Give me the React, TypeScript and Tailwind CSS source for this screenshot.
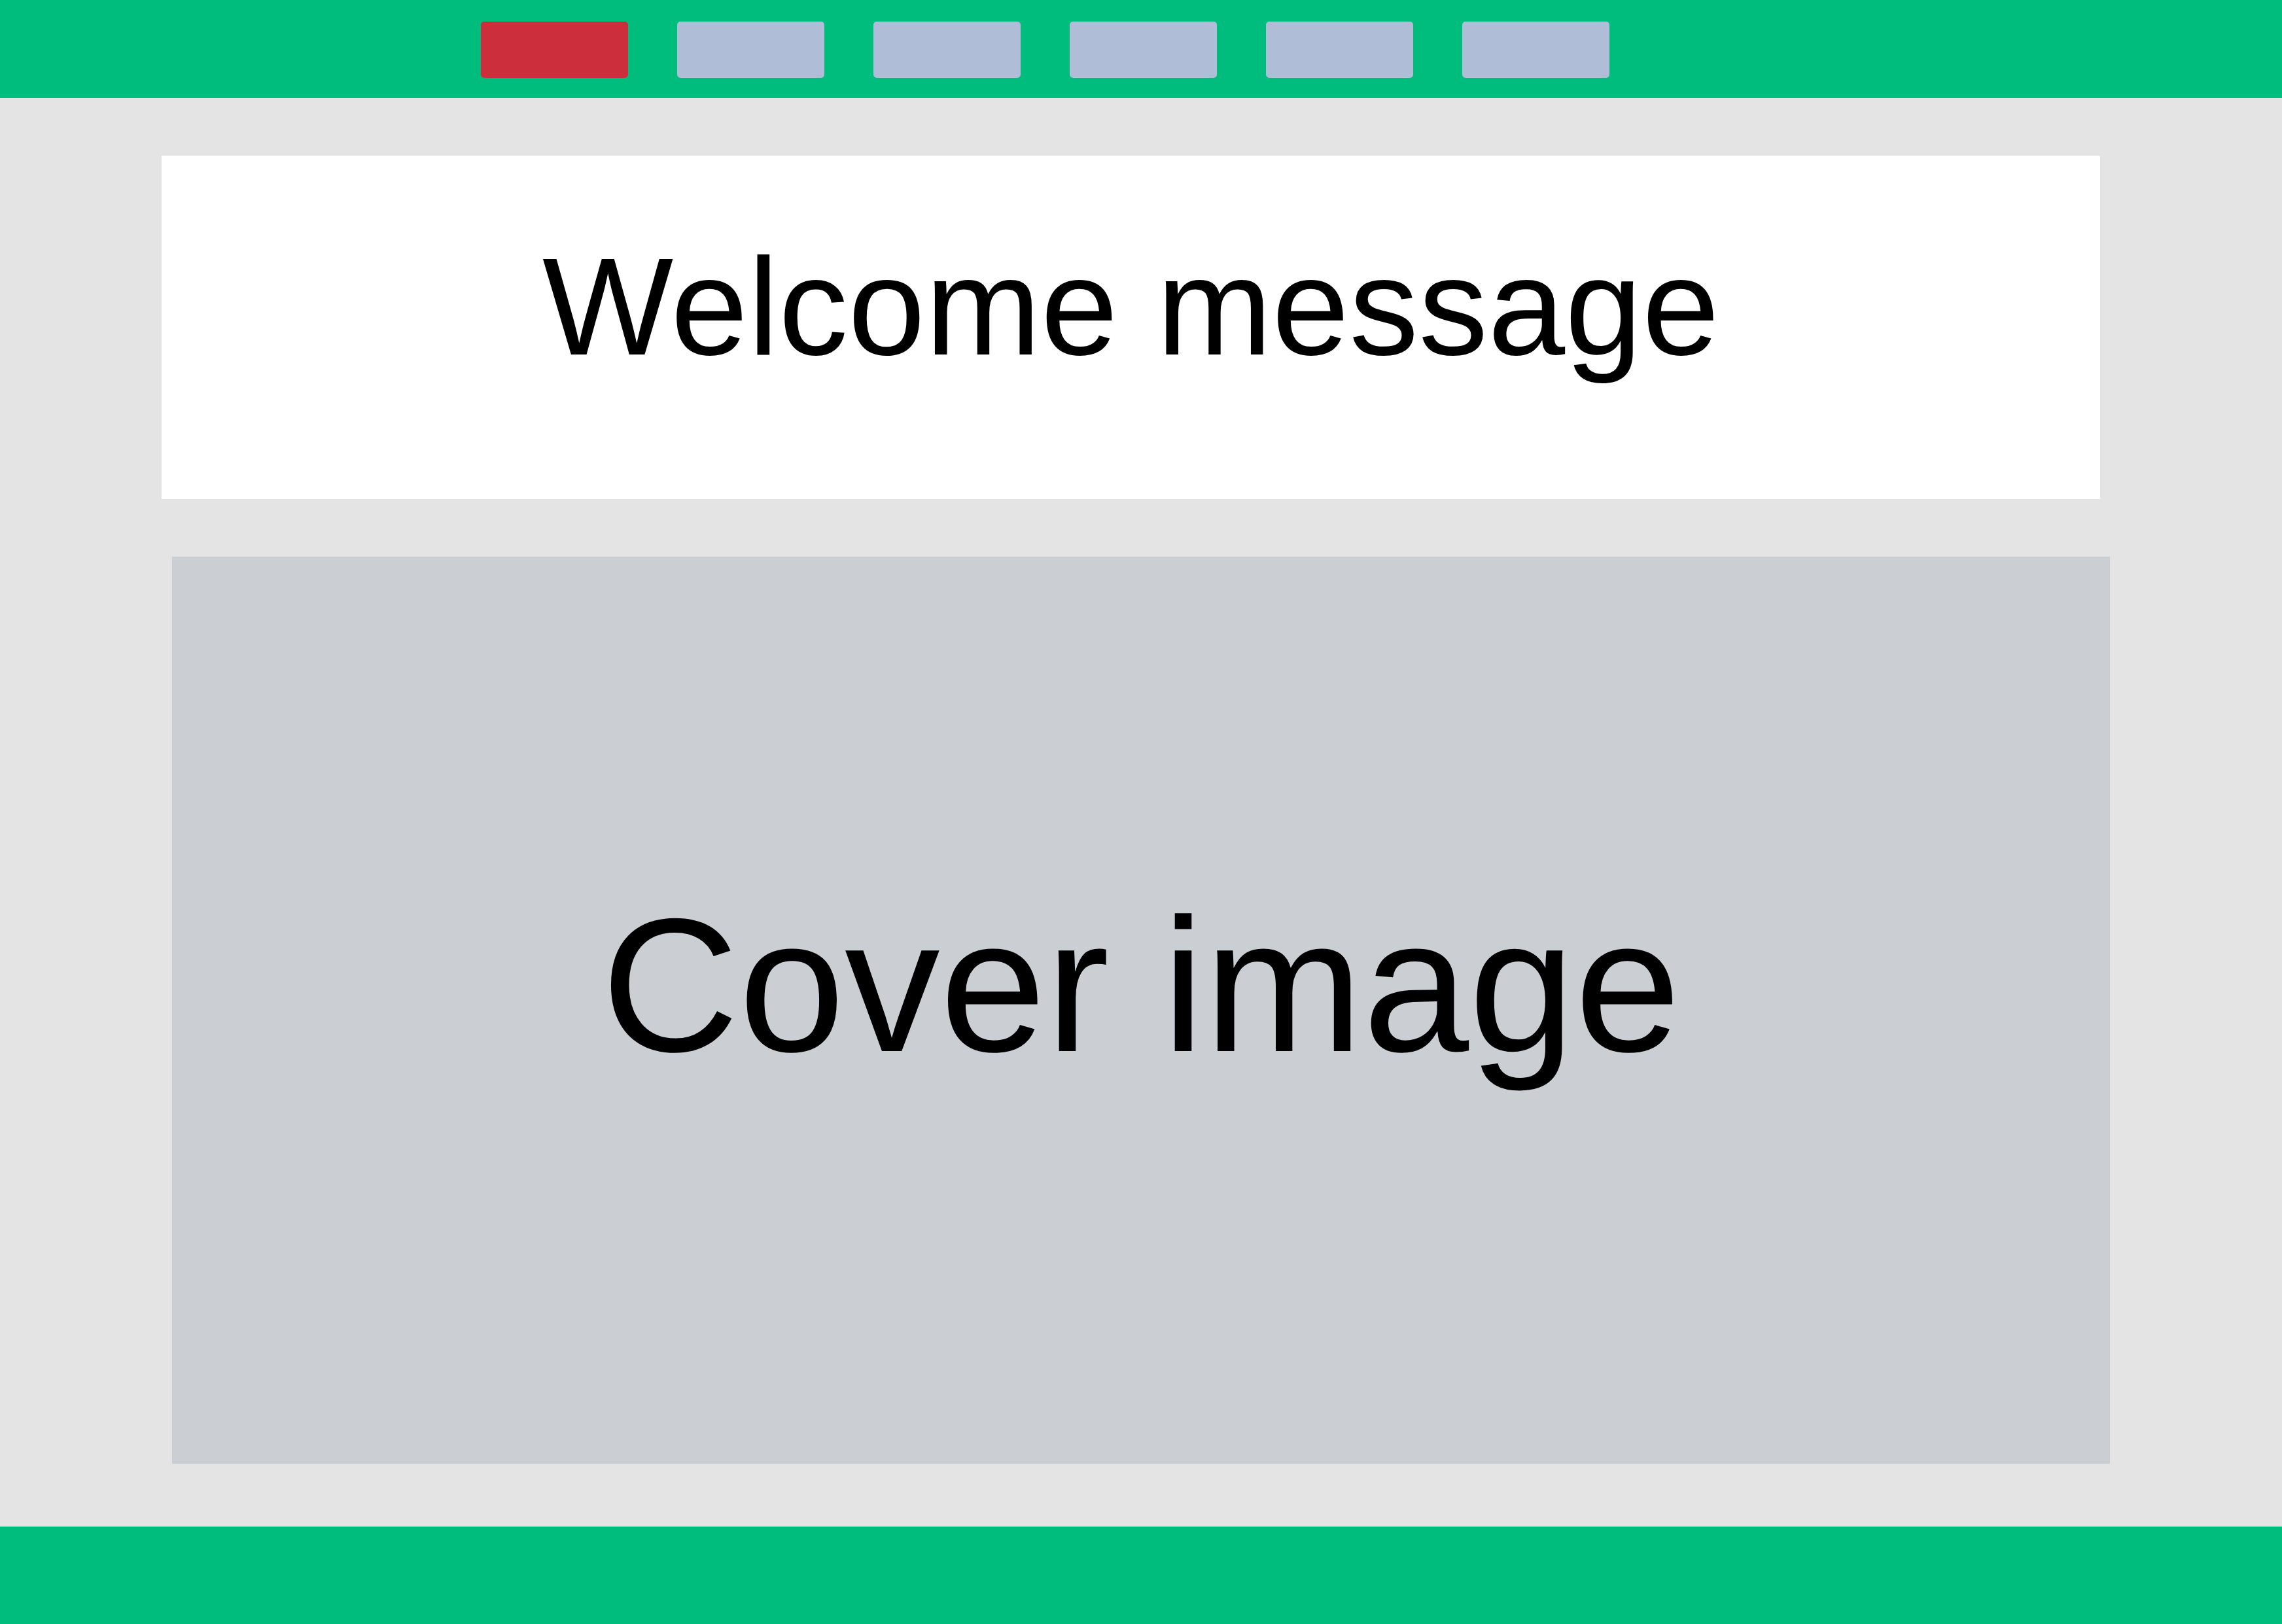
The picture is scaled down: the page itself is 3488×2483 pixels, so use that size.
import React from "react";

export default function App() {
  const buttons = [0, 1, 2, 3, 4, 5];
  return (
    <div className="w-[3488px] h-[2483px] flex flex-col bg-[#e4e4e4] overflow-hidden" style={{ fontFamily: '"Liberation Sans", Arial, sans-serif' }}>
      <header className="h-[150px] shrink-0 bg-[#00bd7e] flex items-start pl-[735px] pt-[33px] gap-[75px]">
        {buttons.map((i) => (
          <div
            key={i}
            className={
              i === 0
                ? "w-[225px] h-[86px] rounded-[5px] bg-[#cc2e3b]"
                : "w-[225px] h-[86px] rounded-[5px] bg-[#b0bdd7]"
            }
          />
        ))}
      </header>
      <main className="h-[2184px] shrink-0 flex flex-col items-start pt-[88px] gap-[88px]">
        <section className="ml-[247px] w-[2963px] h-[525px] bg-white flex justify-center pt-[125px]">
          <h1 className="text-[212px] leading-none text-black font-normal">Welcome message</h1>
        </section>
        <section className="ml-[263px] w-[2962px] h-[1387px] bg-[#cbcfd4] flex justify-center pt-[510px]">
          <p className="text-[291px] leading-none text-black">Cover image</p>
        </section>
      </main>
      <footer className="flex-1 bg-[#00bd7e]" />
    </div>
  );
}
